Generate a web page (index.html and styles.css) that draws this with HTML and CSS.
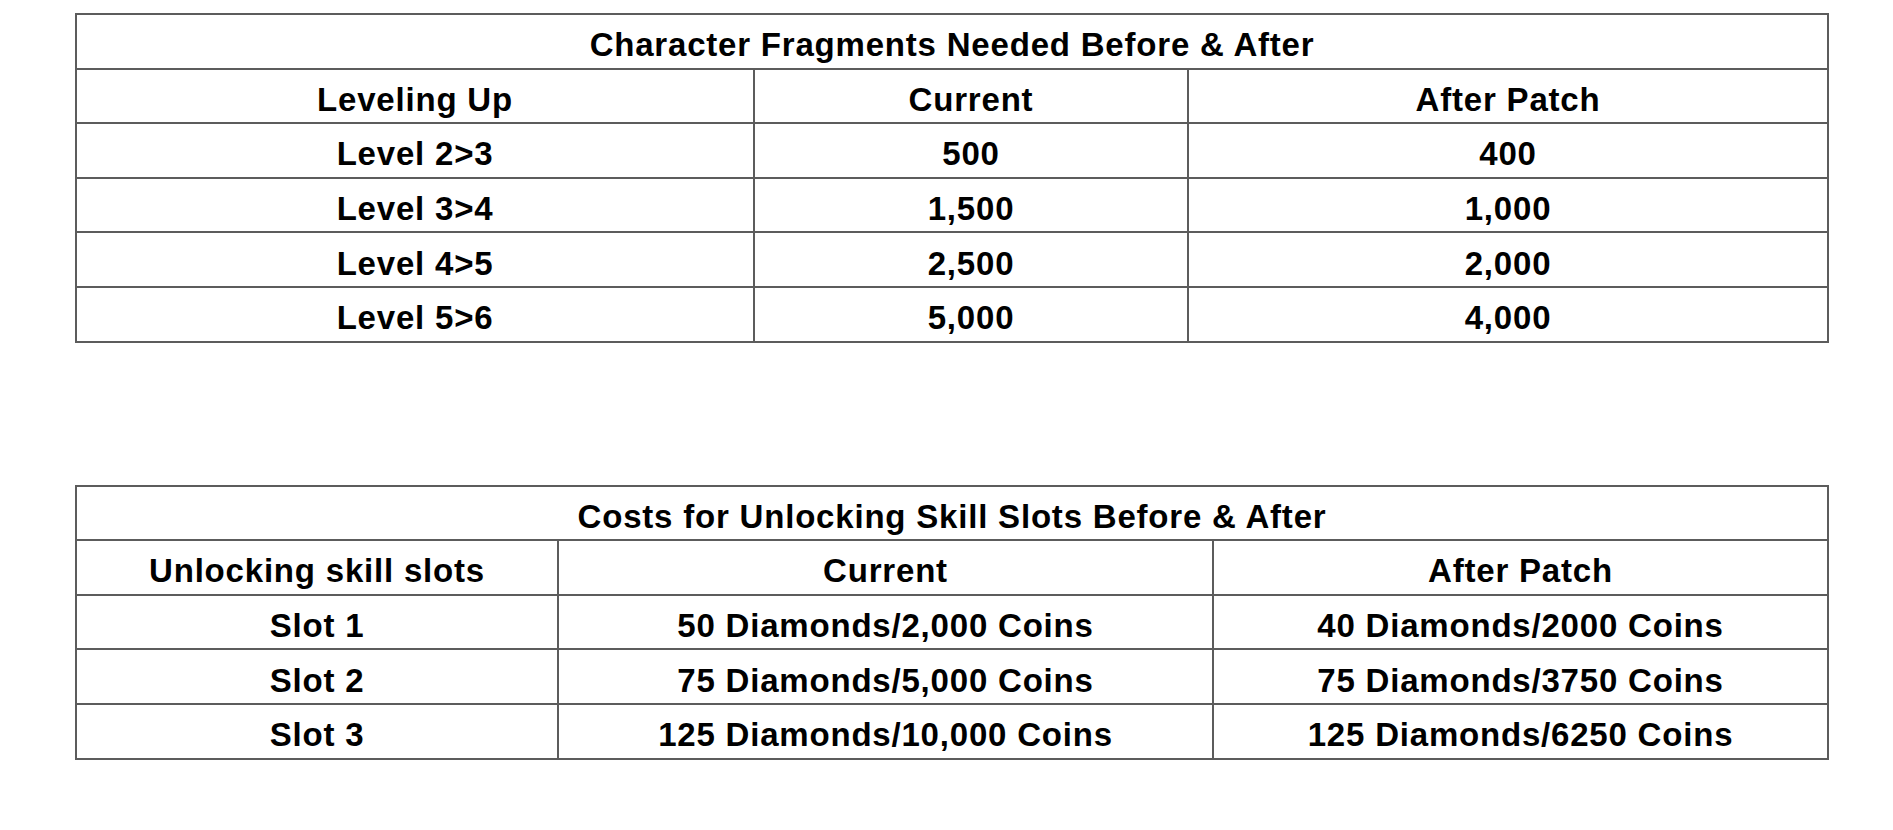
FILE: index.html
```html
<!DOCTYPE html>
<html>
<head>
<meta charset="utf-8">
<link rel="stylesheet" href="styles.css">
</head>
<body>
<div class="page">
  <table class="grid t1">
    <colgroup><col class="c1"><col class="c2"><col class="c3"></colgroup>
    <tr><td colspan="3">Character Fragments Needed Before &amp; After</td></tr>
    <tr><td>Leveling Up</td><td>Current</td><td>After Patch</td></tr>
    <tr><td>Level 2&gt;3</td><td>500</td><td>400</td></tr>
    <tr><td>Level 3&gt;4</td><td>1,500</td><td>1,000</td></tr>
    <tr><td>Level 4&gt;5</td><td>2,500</td><td>2,000</td></tr>
    <tr><td>Level 5&gt;6</td><td>5,000</td><td>4,000</td></tr>
  </table>
  <table class="grid t2">
    <colgroup><col class="c1"><col class="c2"><col class="c3"></colgroup>
    <tr><td colspan="3">Costs for Unlocking Skill Slots Before &amp; After</td></tr>
    <tr><td>Unlocking skill slots</td><td>Current</td><td>After Patch</td></tr>
    <tr><td>Slot 1</td><td>50 Diamonds/2,000 Coins</td><td>40 Diamonds/2000 Coins</td></tr>
    <tr><td>Slot 2</td><td>75 Diamonds/5,000 Coins</td><td>75 Diamonds/3750 Coins</td></tr>
    <tr><td>Slot 3</td><td>125 Diamonds/10,000 Coins</td><td>125 Diamonds/6250 Coins</td></tr>
  </table>
</div>
</body>
</html>
```

FILE: styles.css
```css
html, body {
  margin: 0;
  padding: 0;
  background: #ffffff;
}
.page {
  padding: 13px 0 0 75px;
  display: flex;
  flex-direction: column;
  align-items: flex-start;
  gap: 142px;
}
.grid {
  width: 1752px;
  table-layout: fixed;
  border-collapse: collapse;
  font-family: "Liberation Sans", Arial, sans-serif;
  font-weight: bold;
  font-size: 33px;
  letter-spacing: 0.8px;
  color: #000;
}
.grid td {
  border: 2px solid #5c5c5c;
  height: 54.6px;
  box-sizing: border-box;
  padding: 7px 0 0 0;
  text-align: center;
  vertical-align: middle;
  line-height: 1;
}
.t1 .c1 { width: 678px; }
.t1 .c2 { width: 434px; }
.t1 .c3 { width: 640px; }
.t2 .c1 { width: 482px; }
.t2 .c2 { width: 655px; }
.t2 .c3 { width: 615px; }
```
